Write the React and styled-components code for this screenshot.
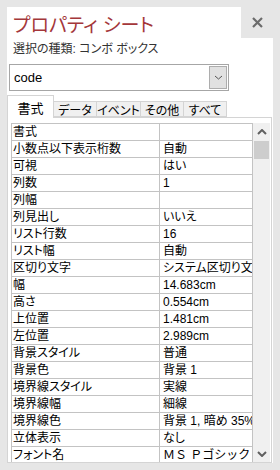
import styled, { createGlobalStyle } from "styled-components";

const GlobalStyle = createGlobalStyle`
    html, body {
        margin: 0;
        padding: 0;
        background: #e6e6e6;
    }
    * {
        box-sizing: border-box;
    }
`;

const FONT = `"Liberation Sans", "Noto Sans CJK JP", sans-serif`;

const Page = styled.div`
    width: 280px;
    height: 470px;
    padding: 7px 0 0 7px;
    background: #e6e6e6;
    overflow: hidden;
    font-family: ${FONT};
    font-feature-settings: "palt";
    color: #1e1e1e;
`;

const Header = styled.div`
    display: flex;
    height: 31px;
`;

const TitleBox = styled.div`
    width: 234px;
    background: #ffffff;
    padding: 7px 0 0 6px;
`;

const Title = styled.div`
    font-size: 19px;
    line-height: 24px;
    color: #a4373a;
    white-space: nowrap;
`;

const CloseButton = styled.div`
    width: 32px;
    display: flex;
    align-items: center;
    justify-content: center;
    padding-bottom: 1px;
`;

const Body = styled.div`
    width: 266px;
    height: 425px;
    background: #ffffff;
    display: flex;
    flex-direction: column;
`;

const Subtitle = styled.div`
    margin: 3px 0 0 6px;
    font-size: 12px;
    line-height: 17px;
    color: #333333;
    white-space: nowrap;
`;

const Combo = styled.div`
    margin: 6px 0 0 2px;
    width: 220px;
    height: 27px;
    border: 1px solid #a6a6a6;
    display: flex;
    align-items: center;
    padding: 1px;
`;

const ComboText = styled.div`
    flex: 1;
    padding-left: 3px;
    font-size: 13px;
    color: #000000;
`;

const DropButton = styled.div`
    width: 18px;
    height: 23px;
    background: #e1e1e1;
    border: 1px solid #adadad;
    display: flex;
    align-items: center;
    justify-content: center;
`;

const TabRow = styled.div`
    display: flex;
    align-items: flex-end;
    margin-top: 4px;
    height: 22px;
`;

const Tab = styled.div`
    width: ${(p) => p.$w}px;
    height: ${(p) => (p.$active ? 23 : 16)}px;
    margin-bottom: ${(p) => (p.$active ? -1 : 0)}px;
    background: ${(p) => (p.$active ? "#ffffff" : "#f0f0f0")};
    border: 1px solid #d4d4d4;
    border-bottom: ${(p) => (p.$active ? "none" : "1px solid #d4d4d4")};
    border-left: ${(p) => (p.$first ? "1px solid #d4d4d4" : "none")};
    display: flex;
    align-items: center;
    justify-content: center;
    font-size: ${(p) => (p.$active ? 13 : 12)}px;
    color: #000000;
    position: relative;
    z-index: ${(p) => (p.$active ? 1 : 0)};
    white-space: nowrap;
`;

const TabPanel = styled.div`
    flex: 1;
    min-height: 0;
    width: 265px;
    border: 1px solid #d4d4d4;
    padding: 5px 1px 0 3px;
    display: flex;
    overflow: hidden;
`;

const Grid = styled.div`
    width: 242px;
    border-top: 1px solid #c3c3c3;
    border-left: 1px solid #c3c3c3;
    border-right: 1px solid #c3c3c3;
    align-self: flex-start;
`;

const Row = styled.div`
    display: flex;
    height: 17px;
    border-bottom: 1px solid #c3c3c3;
    font-size: 12px;
    line-height: 16px;
    color: #000000;
`;

const Label = styled.div`
    width: 148px;
    border-right: 1px solid #c3c3c3;
    padding-left: 1px;
    white-space: nowrap;
    overflow: hidden;
`;

const Value = styled.div`
    flex: 1;
    padding-left: 3px;
    white-space: nowrap;
    overflow: hidden;
    font-feature-settings: ${(p) => (p.$fixed ? "normal" : "palt")};
`;

const ScrollBar = styled.div`
    width: 17px;
    background: #f0f0f0;
    display: flex;
    flex-direction: column;
`;

const ArrowBox = styled.div`
    height: 17px;
    display: flex;
    align-items: center;
    justify-content: center;
`;

const Thumb = styled.div`
    margin: 1px 1px 0 1px;
    height: 18px;
    background: #cdcdcd;
`;

const Track = styled.div`
    flex: 1;
`;

const tabs = [
    { label: "書式", w: 47 },
    { label: "データ", w: 43 },
    { label: "イベント", w: 44 },
    { label: "その他", w: 43 },
    { label: "すべて", w: 43 },
];

const rows = [
    ["書式", ""],
    ["小数点以下表示桁数", "自動"],
    ["可視", "はい"],
    ["列数", "1"],
    ["列幅", ""],
    ["列見出し", "いいえ"],
    ["リスト行数", "16"],
    ["リスト幅", "自動"],
    ["区切り文字", "システム区切り文字"],
    ["幅", "14.683cm"],
    ["高さ", "0.554cm"],
    ["上位置", "1.481cm"],
    ["左位置", "2.989cm"],
    ["背景スタイル", "普通"],
    ["背景色", "背景 1"],
    ["境界線スタイル", "実線"],
    ["境界線幅", "細線"],
    ["境界線色", "背景 1, 暗め 35%"],
    ["立体表示", "なし"],
    ["フォント名", "ＭＳ Ｐゴシック (詳細)", true],
];

const Chevron = ({ up, color = "#606060", w = 10, h = 6, sw = 2 }) => (
    <svg width={w} height={h} viewBox={`0 0 ${w} ${h}`}>
        <polyline
            points={
                up
                    ? `1,${h - 1} ${w / 2},1 ${w - 1},${h - 1}`
                    : `1,1 ${w / 2},${h - 1} ${w - 1},1`
            }
            fill="none"
            stroke={color}
            strokeWidth={sw}
        />
    </svg>
);

const App = () => {
    return (
        <Page>
            <GlobalStyle />
            <Header>
                <TitleBox>
                    <Title>プロパティ シート</Title>
                </TitleBox>
                <CloseButton>
                    <svg width="11" height="11" viewBox="0 0 11 11">
                        <path d="M1 1 L10 10 M10 1 L1 10" stroke="#6b6b6b" strokeWidth="2.2" />
                    </svg>
                </CloseButton>
            </Header>
            <Body>
                <Subtitle>選択の種類: コンボ ボックス</Subtitle>
                <Combo>
                    <ComboText>code</ComboText>
                    <DropButton>
                        <Chevron w={9} h={5} sw={1} color="#555" />
                    </DropButton>
                </Combo>
                <TabRow>
                    {tabs.map((t, i) => (
                        <Tab key={t.label} $w={t.w} $active={i === 0} $first={i === 0}>
                            {t.label}
                        </Tab>
                    ))}
                </TabRow>
                <TabPanel>
                    <Grid>
                        {rows.map(([k, v, fixed]) => (
                            <Row key={k}>
                                <Label>{k}</Label>
                                <Value $fixed={fixed}>{v}</Value>
                            </Row>
                        ))}
                    </Grid>
                    <ScrollBar>
                        <ArrowBox>
                            <Chevron up />
                        </ArrowBox>
                        <Thumb />
                        <Track />
                        <ArrowBox>
                            <Chevron />
                        </ArrowBox>
                    </ScrollBar>
                </TabPanel>
            </Body>
        </Page>
    );
};

export default App;
